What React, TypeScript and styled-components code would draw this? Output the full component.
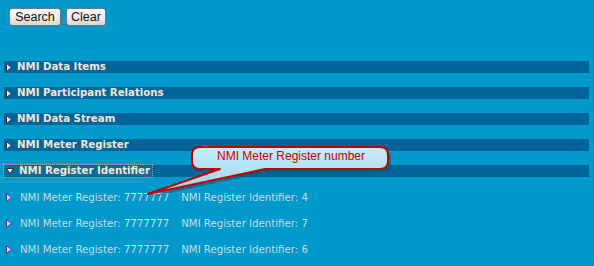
import React from "react";
import styled, { createGlobalStyle } from "styled-components";

const GlobalStyle = createGlobalStyle`
  html, body {
    margin: 0;
    padding: 0;
    background: #0099cc;
  }
  body {
    font-family: "DejaVu Sans", Verdana, sans-serif;
  }
`;

const Page = styled.div`
  position: relative;
  width: 594px;
  height: 266px;
  box-sizing: border-box;
  padding-top: 8px;
  background: #0099cc;
  overflow: hidden;
`;

const Toolbar = styled.div`
  display: flex;
  gap: 5px;
  padding-left: 9px;
`;

const Button = styled.button<{ $w: number }>`
  width: ${(p) => p.$w}px;
  height: 18px;
  padding: 0;
  border: 1px solid #6d7780;
  border-radius: 3px;
  background: linear-gradient(#ffffff, #e9e9e6 60%, #d8d8d2);
  font-family: "Liberation Sans", Arial, sans-serif;
  font-size: 12.5px;
  color: #111;
  line-height: 16px;
`;

const Sections = styled.div`
  display: flex;
  flex-direction: column;
  gap: 14px;
  margin-top: 35px;
  padding: 0 5px 0 4px;
`;

const SectionBar = styled.div`
  display: flex;
  align-items: center;
  height: 12px;
  background: #006699;
  color: #f6e4d4;
  font-weight: bold;
  font-size: 10.2px;
  line-height: 12px;
  white-space: nowrap;
`;

const Title = styled.span<{ $focus?: boolean }>`
  display: flex;
  align-items: center;
  gap: 5px;
  height: 12px;
  padding: 0 2px 0 2px;
  box-sizing: border-box;
  ${(p) =>
    p.$focus &&
    `
    outline: 1px dotted #9aa7b3;
    background: #0a6a9a;
  `}
`;

const Rows = styled.div`
  display: flex;
  flex-direction: column;
  margin-top: -7px;
`;

const Row = styled.div`
  display: flex;
  align-items: center;
  gap: 8px;
  height: 26px;
  padding-left: 2px;
  color: #cbdce6;
  font-size: 10.2px;
  white-space: nowrap;
`;

const Field = styled.span`
  margin-right: 4px;
`;

const Callout = styled.div`
  position: absolute;
  left: 140px;
  top: 144px;
  width: 260px;
  height: 55px;
`;

const CalloutText = styled.span`
  position: absolute;
  left: 53px;
  top: 5px;
  width: 196px;
  text-align: center;
  font-family: "Liberation Sans", Arial, sans-serif;
  font-size: 12px;
  line-height: 14px;
  color: #cc0000;
`;

const Arrow = ({ down, row }: { down?: boolean; row?: boolean }) =>
  down ? (
    <svg width="8" height="6" viewBox="0 0 8 6">
      <path d="M0.5 0.5 H7.5 L4 5.5 Z" fill="#ffffff" stroke="#2a3050" strokeWidth="1" />
    </svg>
  ) : (
    <svg width="6" height="9" viewBox="0 0 6 9">
      <path
        d="M0.5 0.5 L5.5 4.5 L0.5 8.5 Z"
        fill={row ? "#d8d8f0" : "#ffffff"}
        stroke={row ? "#4b3d8f" : "#2a3050"}
        strokeWidth="1"
      />
    </svg>
  );

const sections = [
  "NMI Data Items",
  "NMI Participant Relations",
  "NMI Data Stream",
  "NMI Meter Register",
];

const registers = ["4", "7", "6"];

export default function App() {
  return (
    <>
      <GlobalStyle />
      <Page>
        <Toolbar>
          <Button $w={52}>Search</Button>
          <Button $w={40}>Clear</Button>
        </Toolbar>
        <Sections>
          {sections.map((s) => (
            <SectionBar key={s}>
              <Title>
                <Arrow />
                {s}
              </Title>
            </SectionBar>
          ))}
          <SectionBar>
            <Title $focus>
              <Arrow down />
              NMI Register Identifier
            </Title>
          </SectionBar>
          <Rows>
            {registers.map((r, i) => (
              <Row key={i}>
                <Arrow row />
                <Field>NMI Meter Register: 7777777</Field>
                <span>NMI Register Identifier: {r}</span>
              </Row>
            ))}
          </Rows>
        </Sections>
        <Callout>
          <svg width="260" height="55" viewBox="0 0 260 55">
            <defs>
              <linearGradient id="cg" x1="0" y1="0" x2="0" y2="1">
                <stop offset="0" stopColor="#c9ecf8" />
                <stop offset="1" stopColor="#9ad4ee" />
              </linearGradient>
            </defs>
            <path
              d="M60 3 H240 Q248 3 248 11 V17 Q248 25 240 25 H125 L8 50 L80 25 H60 Q52 25 52 17 V11 Q52 3 60 3 Z"
              transform="translate(3 3)"
              fill="#0b4f72"
              opacity="0.55"
            />
            <path
              d="M60 3 H240 Q248 3 248 11 V17 Q248 25 240 25 H125 L8 50 L80 25 H60 Q52 25 52 17 V11 Q52 3 60 3 Z"
              fill="url(#cg)"
              stroke="#c00000"
              strokeWidth="2"
              strokeLinejoin="round"
            />
          </svg>
          <CalloutText>NMI Meter Register number</CalloutText>
        </Callout>
      </Page>
    </>
  );
}
